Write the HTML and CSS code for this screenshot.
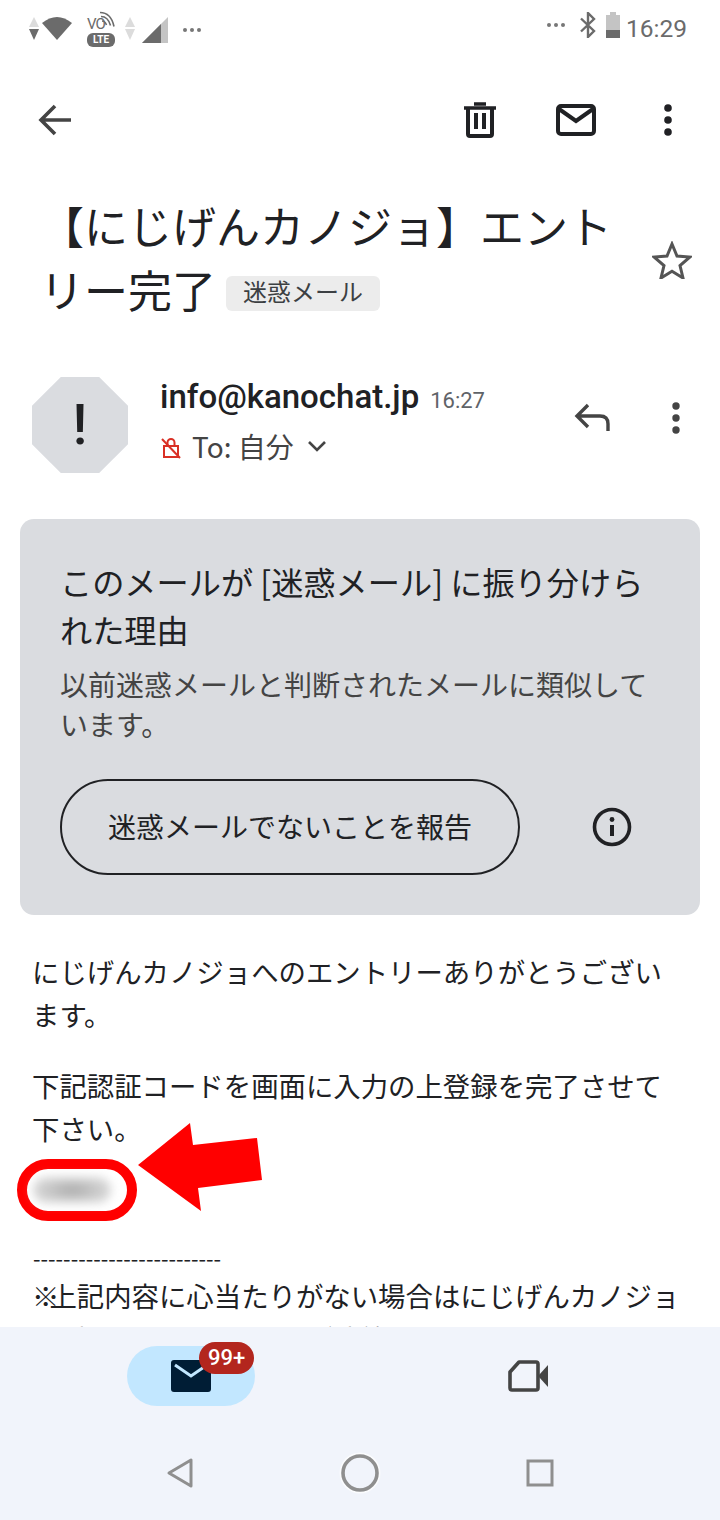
FILE: index.html
```html
<!DOCTYPE html>
<html lang="ja">
<head>
<meta charset="utf-8">
<title>メール</title>
<link rel="stylesheet" href="styles.css">
</head>
<body>
<div class="screen">
  <div class="content">
    <header class="status">
      <div class="status-left">
        <svg class="updown" width="12" height="26" viewBox="0 0 12 26"><path d="M6 2l5 10H1z" fill="#dcdcdc"/><path d="M6 25L1 14h10z" fill="#6b6b6b"/></svg>
        <svg class="wifi" width="30" height="26" viewBox="0 0 30 26"><path d="M0 8Q15-4 30 8L15 25z" fill="#6b6b6b"/></svg>
        <div class="volte">
          <svg width="28" height="18" viewBox="0 0 28 18"><path d="M13 1.500q11 0 14 14M14 5.500q7 0 9.500 9M15 10q3 0 4.500 4" fill="none" stroke="#6b6b6b" stroke-width="1.600"/></svg>
          <span class="vo">VO</span>
          <span class="lte">LTE</span>
        </div>
        <svg class="updown second" width="12" height="26" viewBox="0 0 12 26"><path d="M6 2l5 10H1z" fill="#dcdcdc"/><path d="M6 25L1 14h10z" fill="#dcdcdc"/></svg>
        <svg class="signal" width="26" height="28" viewBox="0 0 26 28"><path d="M0 27L26 1v26z" fill="#c4c4c4"/><path d="M0 27L19 8v19z" fill="#6b6b6b"/></svg>
        <span class="dots"><i></i><i></i><i></i></span>
      </div>
      <div class="status-right">
        <span class="dots"><i></i><i></i><i></i></span>
        <svg class="bt" width="16" height="26" viewBox="0 0 16 26"><path d="M1 6.500l13 12.500-6 6V1l6 6L1 19.500" fill="none" stroke="#6b6b6b" stroke-width="2.400"/></svg>
        <svg class="batt" width="14" height="26" viewBox="0 0 14 26"><path d="M4 0h6v3h4v23H0V3h4z" fill="#c4c4c4"/><path d="M0 18h14v8H0z" fill="#6b6b6b"/></svg>
        <span class="clock">16:29</span>
      </div>
    </header>

    <nav class="toolbar">
      <svg class="back" width="36" height="36" viewBox="0 0 36 36"><path d="M34 18H5M18 4L4 18l14 14" fill="none" stroke="#444" stroke-width="3.600"/></svg>
      <div class="tools">
        <svg class="trash" width="32" height="36" viewBox="0 0 32 36"><path d="M4 6v26a2 2 0 0 0 2 2h20a2 2 0 0 0 2-2V6" fill="none" stroke="#202124" stroke-width="4"/><path d="M0 6h32M10 2h12" fill="none" stroke="#202124" stroke-width="3.400"/><path d="M12 11v16M20 11v16" stroke="#202124" stroke-width="4"/></svg>
        <svg class="mail" width="40" height="32" viewBox="0 0 40 32"><rect x="2" y="2" width="36" height="28" rx="3" fill="none" stroke="#202124" stroke-width="4"/><path d="M3 5l17 12L37 5" fill="none" stroke="#202124" stroke-width="4"/></svg>
        <svg width="12" height="34" viewBox="0 0 12 34"><circle cx="6" cy="5" r="3.800" fill="#202124"/><circle cx="6" cy="17" r="3.800" fill="#202124"/><circle cx="6" cy="29" r="3.800" fill="#202124"/></svg>
      </div>
    </nav>

    <section class="subject">
      <h1 class="subject-text">【にじげんカノジョ】エントリー完了<span class="tag">迷惑メール</span></h1>
      <svg class="star" width="40" height="38" viewBox="0 0 40 38"><path d="M20 3l5 12 13 1-10 8.500 3 12.500-11-6.700L9 37l3-12.500L2 16l13-1z" fill="none" stroke="#555" stroke-width="3"/></svg>
    </section>

    <section class="sender">
      <div class="avatar"><span>!</span></div>
      <div class="sender-info">
        <div class="sender-line"><span class="sender-mail">info@kanochat.jp</span><span class="sender-time">16:27</span></div>
        <div class="to-line">
          <svg class="lock" width="20" height="22" viewBox="0 0 20 22"><path d="M3 9h14v11H3z" fill="none" stroke="#d93025" stroke-width="2"/><path d="M6.500 9V5.500a3.500 3.500 0 0 1 7 0V9" fill="none" stroke="#d93025" stroke-width="2"/><path d="M1 2l18 19" stroke="#d93025" stroke-width="2"/></svg>
          <span class="to-text">To: 自分</span>
          <svg class="chev" width="20" height="12" viewBox="0 0 20 12"><path d="M2 2l8 8 8-8" fill="none" stroke="#444" stroke-width="2.600"/></svg>
        </div>
      </div>
      <svg class="reply" width="36" height="28" viewBox="0 0 36 28"><path d="M34 28v-7q0-8-8-8H3M14 2L3 13l11 11" fill="none" stroke="#444" stroke-width="3.400"/></svg>
      <svg class="sender-more" width="12" height="32" viewBox="0 0 12 32"><circle cx="6" cy="4" r="3.700" fill="#444"/><circle cx="6" cy="16" r="3.700" fill="#444"/><circle cx="6" cy="28" r="3.700" fill="#444"/></svg>
    </section>

    <section class="spam-card">
      <h2 class="spam-title">このメールが [迷惑メール] に振り分けられた理由</h2>
      <p class="spam-text">以前迷惑メールと判断されたメールに類似しています。</p>
      <div class="spam-actions">
        <button class="spam-btn">迷惑メールでないことを報告</button>
        <svg width="40" height="40" viewBox="0 0 40 40"><circle cx="20" cy="20" r="17.500" fill="none" stroke="#202124" stroke-width="3.600"/><path d="M20 18v11" stroke="#202124" stroke-width="4"/><circle cx="20" cy="12.500" r="2.400" fill="#202124"/></svg>
      </div>
    </section>

    <article class="body">
      <p class="para">にじげんカノジョへのエントリーありがとうございます。</p>
      <p class="para">下記認証コードを画面に入力の上登録を完了させて下さい。</p>
      <div class="code-row">
        <div class="code-ring"><div class="code-blur"></div></div>
        <svg class="arrow" width="126" height="90" viewBox="0 0 126 90"><path d="M0 42L52 0l3 22 64-7 5 42-64 8 3 23z" fill="#f00"/></svg>
      </div>
      <p class="rule">-------------------------</p>
      <p class="note"><span class="mark">※</span>上記内容に心当たりがない場合はにじげんカノジョサポートセンターまでご連絡ください。</p>
    </article>
  </div>

  <footer class="bottom">
    <div class="tabs">
      <div class="tab-mail">
        <svg width="40" height="32" viewBox="0 0 40 32"><rect width="40" height="32" rx="3" fill="#001d35"/><path d="M4 5l16 11L36 5" fill="none" stroke="#c2e7ff" stroke-width="3"/></svg>
        <span class="badge">99+</span>
      </div>
      <svg class="tab-video" width="40" height="32" viewBox="0 0 40 32"><path d="M11 2h17a2 2 0 0 1 2 2v24a2 2 0 0 1-2 2H4a2 2 0 0 1-2-2V12z" fill="none" stroke="#444" stroke-width="3.600" stroke-linejoin="round"/><path d="M31 15l9-10v22l-9-10z" fill="#444"/></svg>
    </div>
    <div class="sysnav">
      <svg width="28" height="32" viewBox="0 0 28 32"><path d="M25 3v26L3 16z" fill="none" stroke="#8f8f8f" stroke-width="3" stroke-linejoin="round"/></svg>
      <svg width="42" height="42" viewBox="0 0 42 42"><circle cx="21" cy="21" r="20.500" fill="#fff" opacity=".7"/><circle cx="21" cy="21" r="17" fill="#f1f4fb" stroke="#8f8f8f" stroke-width="3.600"/></svg>
      <svg width="28" height="28" viewBox="0 0 28 28"><rect x="2" y="2" width="24" height="24" fill="none" stroke="#8f8f8f" stroke-width="3"/></svg>
    </div>
  </footer>
</div>
</body>
</html>
```
FILE: styles.css
```css
* { box-sizing: border-box; }
html, body { margin: 0; padding: 0; }
body { font-family: "Noto Sans CJK JP", "Noto Sans", Roboto, sans-serif; background: #fff; color: #202124; }
svg { display: block; flex: none; }

.screen { width: 720px; height: 1520px; display: flex; flex-direction: column; overflow: hidden; }
.content { flex: 1; min-height: 0; overflow: hidden; }

/* status bar */
.status { height: 60px; padding: 10px 33px 0 28px; display: flex; justify-content: space-between; align-items: flex-start; }
.status-left, .status-right { display: flex; align-items: center; height: 36px; }
.wifi { margin-left: 2px; }
.volte { position: relative; width: 28px; height: 36px; margin-left: 15px; }
.volte svg { position: absolute; left: 0; top: 1px; }
.vo { position: absolute; left: 0; top: 7px; font: 15px/14px Roboto, sans-serif; color: #6b6b6b; letter-spacing: -1px; }
.lte { position: absolute; left: 0; top: 23px; width: 28px; height: 14px; border-radius: 6px; background: #6b6b6b; color: #fff; font: bold 10px/14px Roboto, sans-serif; text-align: center; }
.second { margin-left: 9px; }
.signal { margin: 4px 0 0 6px; }
.dots { display: flex; gap: 3px; margin: 4px 0 0 15px; }
.dots i { width: 4px; height: 4px; border-radius: 50%; background: #777; }
.status-right .dots { margin: 0 15px 6px 0; }
.bt, .batt { margin-bottom: 6px; }
.batt { margin-left: 10px; }
.clock { margin: 1px 0 0 6px; font: 24.500px/28px Roboto, sans-serif; color: #6b6b6b; }

/* action bar */
.toolbar { height: 120px; padding: 0 46px 0 37px; display: flex; justify-content: space-between; align-items: center; }
.tools { display: flex; align-items: center; }
.trash { margin-right: 60px; }
.mail { margin-right: 66px; }

/* subject */
.subject { margin-top: 13px; padding: 0 28px 0 40px; display: flex; align-items: center; justify-content: space-between; height: 134px; }
.subject-text { margin: 0; align-self: flex-start; width: 578px; height: 128px; font-weight: 400; font-size: 44px; line-height: 64px; color: #202124; }
.tag { display: inline-block; vertical-align: 7px; margin-left: 10px; padding: 0 17px; height: 35px; line-height: 29px; font-size: 24px; background: #ececec; border-radius: 6px; color: #3c4043; }

/* sender row */
.sender { height: 192px; padding: 50px 38px 0 32px; display: flex; align-items: flex-start; }
.avatar { width: 96px; height: 96px; background: #dadce0; clip-path: polygon(30% 0, 70% 0, 100% 30%, 100% 70%, 70% 100%, 30% 100%, 0 70%, 0 30%); display: flex; align-items: center; justify-content: center; font: 500 56px/1 Roboto, sans-serif; }
.sender-info { flex: 1; padding-left: 32px; }
.sender-line { display: flex; align-items: baseline; gap: 11px; }
.sender-mail { font: 500 33px/40px Roboto, sans-serif; color: #202124; }
.sender-time { font: 22px/40px Roboto, sans-serif; color: #5f6368; }
.to-line { display: flex; align-items: center; margin-top: 5px; height: 40px; color: #444; }
.lock { margin: 4px 0 0 1px; }
.to-text { font-size: 28px; margin-left: 11px; }
.chev { margin-left: 13px; }
.reply { margin: 26px 60px 0 0; }
.sender-more { margin-top: 25px; }

/* spam notice */
.spam-card { margin: 0 20px; height: 396px; padding: 38px 40px 0; background: #dadce0; border-radius: 14px; }
.spam-title { margin: 0; font-weight: 400; font-size: 32.200px; line-height: 48px; color: #202124; }
.spam-text { margin: 11px 0 0; font-size: 28px; line-height: 40px; color: #444; }
.spam-actions { display: flex; align-items: center; margin-top: 35px; gap: 72px; }
.spam-btn { width: 460px; height: 96px; padding: 0 0 2px; border: 2px solid #202124; border-radius: 48px; background: none; font: 28px/1 "Noto Sans CJK JP", sans-serif; color: #202124; }

/* message body */
.body { padding: 35px 20px 0 32px; font-size: 27.400px; line-height: 43px; color: #202124; }
.para { margin: 0 0 28px; width: 640px; }
.code-row { position: relative; height: 72px; margin: -28px 0 18px; }
.code-ring { position: absolute; left: -15px; top: 9px; width: 120px; height: 62px; border: 10px solid #f00; border-radius: 31px; padding: 8px 6px; }
.code-blur { height: 26px; width: 78px; border-radius: 13px; background: radial-gradient(closest-side, #aaa, #d8d8d8); filter: blur(5px); }
.arrow { position: absolute; left: 106px; top: -27px; }
.rule, .note { margin: 0; }
.rule { font-size: 21.700px; line-height: 36px; padding-left: 1px; }
.note { margin-top: -2px; }
.mark { letter-spacing: -10px; }

/* bottom navigation */
.bottom { flex: none; height: 193px; background: #f1f4fb; }
.tabs { height: 98px; padding: 19px 172px 0 127px; display: flex; justify-content: space-between; }
.tab-mail { position: relative; width: 128px; height: 60px; border-radius: 30px; background: #c2e7ff; display: flex; align-items: center; justify-content: center; }
.badge { position: absolute; left: 72px; top: -4px; width: 55px; height: 32px; border-radius: 16px; background: #b3261e; color: #fff; font: 500 22px/32px Roboto, sans-serif; text-align: center; }
.tab-video { margin-top: 14px; }
.sysnav { height: 95px; padding: 0 166px 0; display: flex; justify-content: space-between; align-items: center; }
```
